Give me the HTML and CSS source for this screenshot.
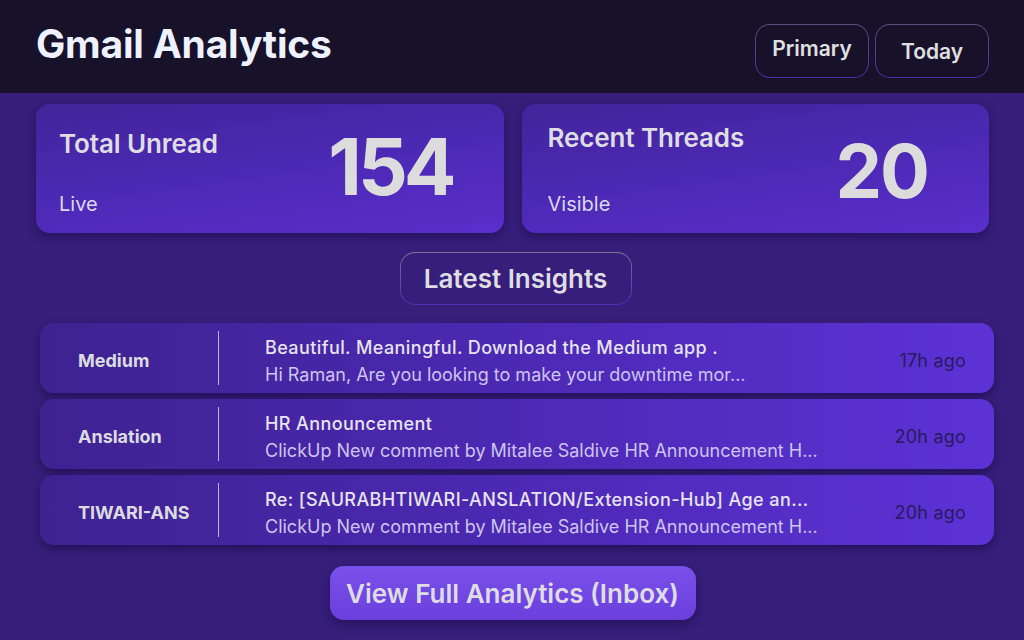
FILE: index.html
```html
<!DOCTYPE html>
<html lang="en">
<head>
<meta charset="utf-8">
<title>Gmail Analytics</title>
<link rel="stylesheet" href="styles.css">
</head>
<body>
<header class="topbar">
  <h1 class="brand">Gmail Analytics</h1>
  <div class="filters">
    <button class="chip chip--primary">Primary</button>
    <button class="chip chip--today">Today</button>
  </div>
</header>
<main class="content">
  <section class="stats">
    <div class="stat stat--unread">
      <div class="stat-text">
        <div class="stat-title">Total Unread</div>
        <div class="stat-sub">Live</div>
      </div>
      <div class="stat-value">154</div>
    </div>
    <div class="stat stat--threads">
      <div class="stat-text">
        <div class="stat-title">Recent Threads</div>
        <div class="stat-sub">Visible</div>
      </div>
      <div class="stat-value">20</div>
    </div>
  </section>
  <div class="section-head"><h2 class="pill">Latest Insights</h2></div>
  <ul class="threads">
    <li class="thread">
      <div class="sender">Medium</div>
      <div class="thread-body">
        <div class="subject">Beautiful. Meaningful. Download the Medium app .</div>
        <div class="preview">Hi Raman, Are you looking to make your downtime mor...</div>
      </div>
      <div class="time">17h ago</div>
    </li>
    <li class="thread">
      <div class="sender">Anslation</div>
      <div class="thread-body">
        <div class="subject">HR Announcement</div>
        <div class="preview">ClickUp New comment by Mitalee Saldive HR Announcement H...</div>
      </div>
      <div class="time">20h ago</div>
    </li>
    <li class="thread">
      <div class="sender">TIWARI-ANS</div>
      <div class="thread-body">
        <div class="subject">Re: [SAURABHTIWARI-ANSLATION/Extension-Hub] Age an...</div>
        <div class="preview">ClickUp New comment by Mitalee Saldive HR Announcement H...</div>
      </div>
      <div class="time">20h ago</div>
    </li>
  </ul>
  <div class="cta-wrap"><button class="cta">View Full Analytics (Inbox)</button></div>
</main>
</body>
</html>
```

FILE: styles.css
```css
* { box-sizing: border-box; }
html, body { margin: 0; padding: 0; }
body {
  width: 1024px;
  height: 640px;
  overflow: hidden;
  background: #361e7a;
  font-family: Inter, "Noto Sans", "Liberation Sans", sans-serif;
  color: #dcdcdc;
}
.topbar {
  height: 93px;
  background: #17112a;
  display: flex;
  align-items: center;
  justify-content: space-between;
  padding: 0 35px 0 36px;
}
.brand {
  margin: -6px 0 0;
  font-size: 39px;
  font-weight: 700;
  letter-spacing: -0.2px;
  color: #eef2ff;
}
.filters {
  display: flex;
  gap: 6px;
  margin-top: 8px;
}
.chip {
  width: 114px;
  height: 54px;
  border-radius: 15px;
  border: 1px solid transparent;
  background:
    linear-gradient(#17112a, #17112a) padding-box,
    linear-gradient(to bottom, #5a4f7c, #4a2fa6) border-box;
  color: #e0e0e0;
  font-family: inherit;
  font-size: 21px;
  font-weight: 600;
  padding: 0;
}
.chip--primary { padding-bottom: 5px; }
.chip--today { padding-top: 2px; }
.content {
  padding: 11px 35px 0 36px;
}
.stats {
  display: grid;
  grid-template-columns: 1fr 1fr;
  gap: 18px;
}
.stat {
  height: 129px;
  border-radius: 14px;
  background: linear-gradient(172deg, #42249a 0%, #4c29b4 50%, #5a2ecb 100%);
  box-shadow: 0 4px 8px rgba(20, 8, 60, 0.45);
  display: flex;
  justify-content: space-between;
  align-items: center;
  padding: 0 51px 0 23px;
}
.stat--threads { padding-right: 61px; padding-left: 26px; }
.stat-text {
  display: flex;
  flex-direction: column;
  justify-content: space-between;
  height: 100%;
  padding: 24px 0 17px;
}
.stat--threads .stat-text { padding-top: 18px; }
.stat-title {
  font-size: 26px;
  font-weight: 600;
  letter-spacing: -0.1px;
  color: #dedde3;
}
.stat-sub {
  font-size: 20px;
  font-weight: 400;
  color: #dcd8ee;
}
.stat-value {
  font-size: 78px;
  font-weight: 700;
  letter-spacing: -4px;
  color: #dcdcdc;
  margin-top: -4px;
}
.stat--threads .stat-value { font-size: 74px; letter-spacing: -2px; margin-top: 4px; }
.section-head {
  display: flex;
  justify-content: center;
  margin-top: 19px;
  padding-left: 6px;
}
.pill {
  margin: 0;
  width: 232px;
  height: 53px;
  display: flex;
  align-items: center;
  justify-content: center;
  border-radius: 15px;
  border: 1px solid transparent;
  background:
    linear-gradient(#361e7a, #361e7a) padding-box,
    linear-gradient(to bottom, #7e7396, #4c2fb8) border-box;
  font-size: 26px;
  font-weight: 600;
  color: #dedde3;
}
.threads {
  list-style: none;
  margin: 18px -5px 0 4px;
  padding: 0;
  display: flex;
  flex-direction: column;
  gap: 6px;
}
.thread {
  height: 70px;
  border-radius: 14px;
  background: linear-gradient(90deg, #3e2290 0%, #4b28b0 45%, #5c32d6 100%);
  box-shadow: 0 4px 7px rgba(20, 8, 60, 0.5);
  display: flex;
  align-items: center;
  padding: 0 28px 0 38px;
}
.sender {
  width: 141px;
  height: 54px;
  display: flex;
  align-items: center;
  padding-top: 4px;
  border-right: 1px solid rgba(230, 225, 245, 0.75);
  font-size: 18px;
  font-weight: 700;
  color: #dcdce0;
}
.thread-body {
  flex: 1;
  min-width: 0;
  margin-left: 46px;
  display: flex;
  flex-direction: column;
  gap: 5px;
  padding-top: 7px;
}
.subject {
  font-size: 18px;
  line-height: 22px;
  font-weight: 500;
  letter-spacing: 0.4px;
  color: #e6e4ee;
  white-space: nowrap;
  overflow: hidden;
}
.preview {
  font-size: 18px;
  line-height: 22px;
  font-weight: 400;
  color: #cdc5ef;
  white-space: nowrap;
  overflow: hidden;
}
.time {
  font-size: 18px;
  font-weight: 400;
  letter-spacing: 0.2px;
  color: #2a1a5e;
  margin-left: 20px;
  padding-top: 4px;
}
.cta-wrap {
  display: flex;
  justify-content: center;
  margin-top: 21px;
}
.cta {
  width: 366px;
  height: 54px;
  border: none;
  border-radius: 14px;
  background: linear-gradient(to bottom, #7a50ea, #6a3fdc);
  box-shadow: 0 4px 8px rgba(20, 8, 60, 0.45);
  color: #dedde3;
  font-family: inherit;
  font-size: 26px;
  font-weight: 600;
  padding: 0;
}
```
